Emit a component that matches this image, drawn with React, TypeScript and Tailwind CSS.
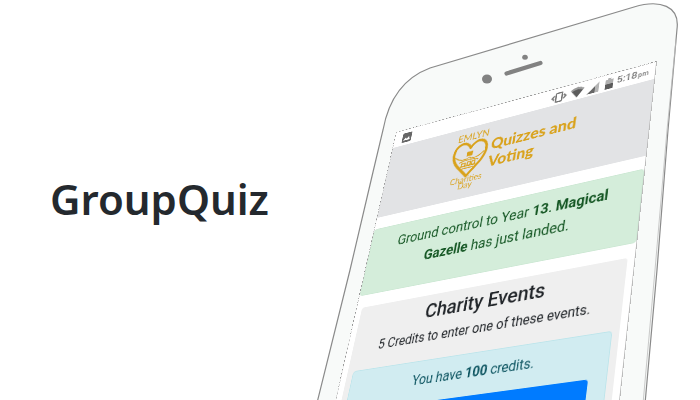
import React from "react";

function PhoneBody() {
  return (
    <svg viewBox="0 0 400 400" className="absolute inset-0 h-full w-full" aria-hidden="true">
      <path
        d="M14 415 L50 270 L73 172 L83 130 C87 108 98 80 130 68 L334 7 C360 -1 380 6 377 29 L368 130 L357 270 L344 415 Z"
        fill="#f8faf9"
        stroke="#8a8a8a"
        strokeWidth="1.2"
      />
      <path d="M376 40 L367 130 L355 270 L342 415" fill="none" stroke="#bcbcbc" strokeWidth="0.8" />
      <ellipse cx="187" cy="79" rx="5" ry="4.6" fill="#828282" />
      <ellipse cx="225" cy="57.3" rx="2.8" ry="2.5" fill="#828282" />
      <path d="M206.500 73.500 L240.500 63" stroke="#828282" strokeWidth="4.200" strokeLinecap="round" />
    </svg>
  );
}

function StatusIcons() {
  return (
    <svg viewBox="0 0 88 18" className="h-[18px] w-[88px]" aria-hidden="true">
      <g fill="none" stroke="#777" strokeWidth="2">
        <rect x="9" y="4" width="8" height="12" rx="1" />
        <path d="M7 7L4 10L7 13M19 7L22 10L19 13" />
      </g>
      <path d="M28 6Q37 -1 46 6L37 17Z" fill="#9a9a9a" />
      <path d="M30 8Q37 4 44 8L37 17Z" fill="#5c5c5c" />
      <path d="M50 17L65 3V17Z" fill="#b5b5b5" />
      <path d="M50 17L60 8V17Z" fill="#666" />
      <path d="M73 4h3V2h4v2h3v13H73Z" fill="#b0b0b0" />
      <path d="M73 10h10v7H73Z" fill="#5c5c5c" />
    </svg>
  );
}

function CharityLogo() {
  return (
    <svg viewBox="0 0 54 84" className="h-[88px] w-[56px]" aria-label="Emlyn Charities Day">
      <g fill="none" stroke="#d9a21b" strokeLinecap="round" strokeLinejoin="round">
        <path
          d="M30 61C21 50 8 42 8 29C8 14 23 11 30 23C37 11 52 14 52 29C52 42 39 50 30 61Z"
          strokeWidth="3.500"
        />
        <path d="M11 33Q21 41 30 36Q39 41 49 32M18 41Q30 37 43 41M20 47h20M23 50h14" strokeWidth="1.3" />
        <path d="M21 43h5v4h-5zM29 42h4v5h-4zM35 42h4v5h-4z" strokeWidth="1.5" />
      </g>
      <path d="M26 28h8v6H26Z" fill="#d9a21b" />
      <g fill="#d9a21b" fontFamily="Lato, sans-serif" textAnchor="middle">
        <text x="31" y="12" fontSize="13" fontWeight="400">EMLYN</text>
        <text x="31" y="69" fontSize="11" fontWeight="400">Charities</text>
        <text x="31" y="77" fontSize="11" fontWeight="400">Day</text>
      </g>
    </svg>
  );
}

function PhoneScreen() {
  return (
    <div className="absolute top-0 left-0 w-[360px] origin-top-left [transform:matrix3d(0.61086,-0.21672,0,-0.00031972,-0.18048,0.6268,0,-0.00030833,0,0,1,0,96,132,0,1)] border-t border-r border-l border-t-[#999] border-r-[#bbb] border-l-[#999] [border-style:dashed_solid_none_dashed] bg-white font-['Roboto',sans-serif] text-base text-[#212529]">
      <div className="flex h-[23px] items-center px-2 text-[#777]">
        <svg viewBox="0 0 14 14" className="mr-auto ml-1 h-[14px] w-[14px]" aria-hidden="true">
          <rect width="14" height="14" rx="2" fill="#666" />
          <path d="M2 11L5 7L7 9L10 6L12 11Z" fill="#fff" />
        </svg>
        <StatusIcons />
        <span className="text-[13px] leading-6 font-medium">
          5:18<span className="pl-px text-[9px]">pm</span>
        </span>
      </div>

      <header className="flex h-[100px] items-center justify-center gap-1 bg-[#e2e3e5] pl-3">
        <CharityLogo />
        <p className="w-32 pb-3 font-['Lato',sans-serif] text-[21px] leading-6 font-black text-[#d9a21b]">
          Quizzes and Voting
        </p>
      </header>

      <div className="mt-4 h-[89px] rounded-sm border border-[#cde8d4] bg-[#d4edda] px-5 py-2 text-center text-lg leading-7 text-[#155724]">
        <p>
          Ground control to Year <strong>13</strong>. <strong>Magical Gazelle</strong> has just landed.
        </p>
      </div>

      <section className="mx-2 mt-4 rounded bg-[#efefef] px-2 pt-1.5 pb-2 text-center">
        <h2 className="text-2xl leading-7 font-medium">Charity Events</h2>
        <p className="mt-1.5 mb-4">5 Credits to enter one of these events.</p>
        <div className="rounded border border-[#bee5eb] bg-[#d1ecf1] px-5 pt-2.5 text-[#0c5460]">
          <p>
            You have <strong>100</strong> credits.
          </p>
          <button type="button" aria-label="Enter event" className="mt-3.5 h-24 w-full rounded bg-[#007bff]" />
        </div>
      </section>
    </div>
  );
}

export default function App() {
  return (
    <main className="flex h-screen items-start overflow-hidden bg-white">
      <h1 className="flex h-[400px] flex-1 items-center pb-0.5 pl-[50px] font-['Noto_Sans',sans-serif] text-[42px] leading-none font-semibold whitespace-nowrap text-[#24292e]">
        GroupQuiz
      </h1>
      <div className="relative h-[400px] w-[400px] shrink-0">
        <PhoneBody />
        <PhoneScreen />
      </div>
    </main>
  );
}
